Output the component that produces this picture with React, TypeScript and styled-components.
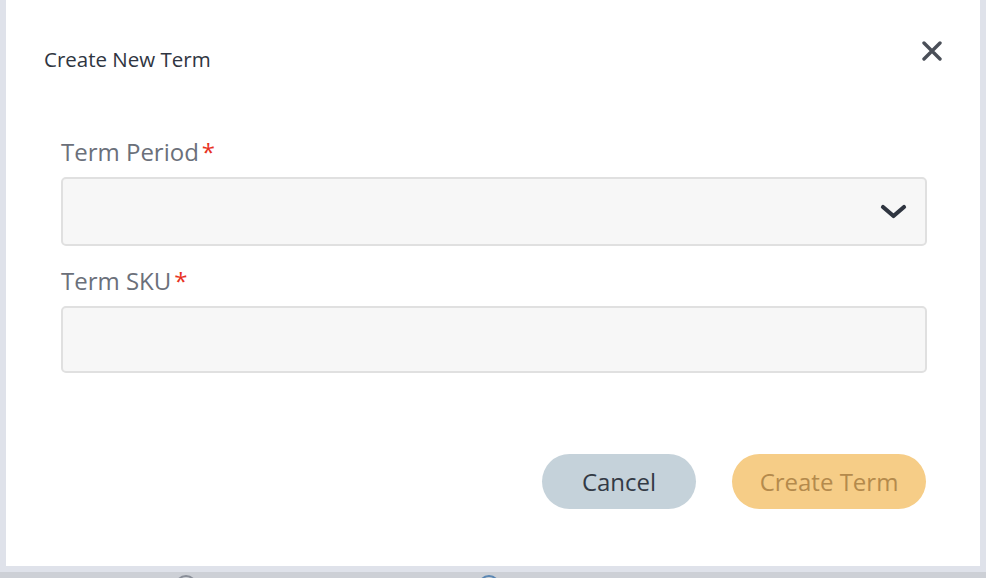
import styled, { createGlobalStyle } from "styled-components";

const GlobalStyle = createGlobalStyle`
  html, body {
    margin: 0;
    padding: 0;
    height: 578px;
    overflow: hidden;
    background: #dfe2ea;
    font-family: "Open Sans", "Noto Sans", sans-serif;
  }
`;

const Page = styled.div`
  height: 578px;
  display: flex;
  flex-direction: column;
  overflow: hidden;
`;

const Modal = styled.div`
  margin: 0 6px;
  height: 566px;
  flex-shrink: 0;
  background: #ffffff;
  box-sizing: border-box;
  padding: 40px 37px 0 38px;
`;

const Header = styled.div`
  display: flex;
  justify-content: space-between;
  align-items: flex-start;
  height: 33px;
`;

const Title = styled.h2`
  margin: 5px 0 0;
  font-size: 20.5px;
  line-height: 28px;
  font-weight: 500;
  color: #2f3541;
`;

const CloseButton = styled.button`
  width: 22px;
  height: 22px;
  padding: 0;
  border: none;
  background: none;
  cursor: pointer;
  display: flex;
  align-items: center;
  justify-content: center;
`;

const Form = styled.div`
  padding: 64px 16px 0 17px;
  display: flex;
  flex-direction: column;
`;

const Label = styled.label<{ $first?: boolean }>`
  display: block;
  margin-top: ${(p) => (p.$first ? "0" : "20px")};
  font-size: 24px;
  line-height: 30px;
  font-weight: 500;
  color: #6b707a;
`;

const Star = styled.span`
  color: #e8321f;
  margin-left: 3px;
`;

const Field = styled.div<{ $h: number }>`
  margin-top: 10px;
  height: ${(p) => p.$h}px;
  box-sizing: border-box;
  border: 2px solid #e0e0e0;
  border-radius: 5px;
  background: #f7f7f7;
  display: flex;
  align-items: center;
  justify-content: flex-end;
  padding-right: 18px;
`;

const Actions = styled.div`
  display: flex;
  justify-content: flex-end;
  gap: 36px;
  margin-top: 81px;
  padding-right: 1px;
`;

const Button = styled.button<{ $variant: "cancel" | "primary" }>`
  height: 55px;
  width: ${(p) => (p.$variant === "cancel" ? "154px" : "194px")};
  padding: 0;
  border: none;
  border-radius: 28px;
  font-family: inherit;
  font-size: 24px;
  font-weight: 500;
  background: ${(p) => (p.$variant === "cancel" ? "#c5d2da" : "#f6cd87")};
  color: ${(p) => (p.$variant === "cancel" ? "#333a45" : "#b48a4c")};
  cursor: pointer;
`;

const Underlay = styled.div`
  margin-top: 6px;
  flex: 1;
  background: #cdd0d6;
  overflow: hidden;
  display: flex;
  align-items: flex-start;
  padding-left: 175px;
  gap: 18px;
`;

const UnderText = styled.span`
  font-size: 28px;
  line-height: 28px;
  color: #8a8f99;
  margin-top: 2px;
`;

const Circle = styled.span<{ $c: string }>`
  width: 18px;
  height: 18px;
  border-radius: 50%;
  border: 2px solid ${(p) => p.$c};
  margin-top: 3px;
  flex-shrink: 0;
`;

export default function App() {
  return (
    <Page>
      <GlobalStyle />
      <Modal>
        <Header>
          <Title>Create New Term</Title>
          <CloseButton aria-label="Close">
            <svg width="20" height="20" viewBox="0 0 20 20">
              <path d="M2 2 L18 18 M18 2 L2 18" stroke="#4a4f58" strokeWidth="3.4" strokeLinecap="round" />
            </svg>
          </CloseButton>
        </Header>
        <Form>
          <Label $first>
            Term Period<Star>*</Star>
          </Label>
          <Field $h={69}>
            <svg width="27" height="15" viewBox="0 0 27 15">
              <path d="M3 3 L13.5 12 L24 3" stroke="#2f3540" strokeWidth="4.2" fill="none" strokeLinecap="round" strokeLinejoin="round" />
            </svg>
          </Field>
          <Label>
            Term SKU<Star>*</Star>
          </Label>
          <Field $h={67} />
          <Actions>
            <Button $variant="cancel">Cancel</Button>
            <Button $variant="primary">Create Term</Button>
          </Actions>
        </Form>
      </Modal>
      <Underlay>
        <Circle $c="#8a8f99" />
        <UnderText>Your order list is in</UnderText>
        <Circle $c="#5b87b3" />
      </Underlay>
    </Page>
  );
}
